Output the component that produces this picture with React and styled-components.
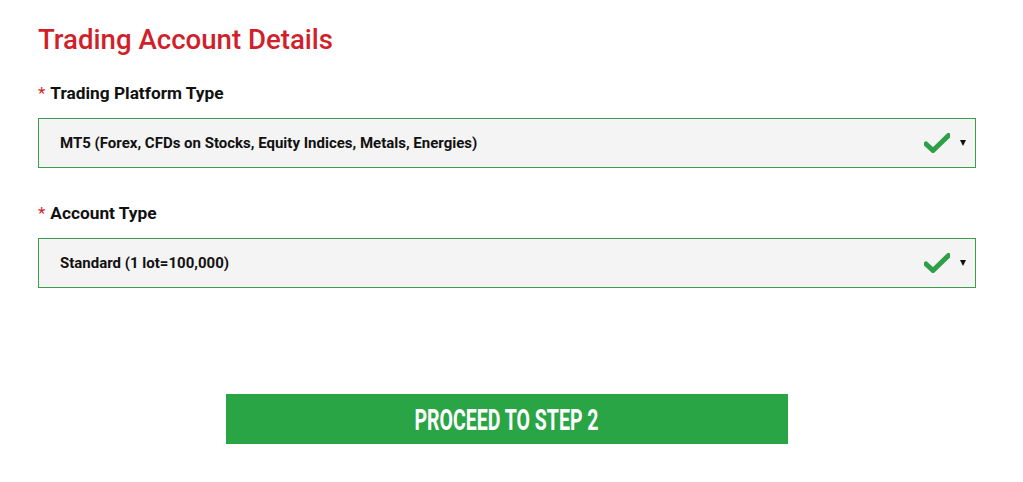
import React from "react";
import styled, { createGlobalStyle } from "styled-components";

const Global = createGlobalStyle`
  html, body { margin: 0; padding: 0; background: #fff; }
  body { font-family: Roboto, "Liberation Sans", Arial, sans-serif; color: #111; }
`;

const Page = styled.div`
  width: 1023px;
  height: 482px;
  box-sizing: border-box;
  padding: 24px 47px 0 38px;
  display: flex;
  flex-direction: column;
`;

const Title = styled.h2`
  margin: 0;
  font-size: 27.6px;
  line-height: 32px;
  font-weight: 500;
  color: #d11f2b;
`;

const Field = styled.div`
  display: flex;
  flex-direction: column;
  margin-top: ${(p) => p.$top}px;
`;

const Label = styled.label`
  font-size: 17.3px;
  line-height: 20px;
  font-weight: 700;
  color: #111;
  display: flex;
  align-items: baseline;
  gap: 5px;
`;

const Star = styled.span`
  color: #d11f2b;
  font-weight: 400;
  font-size: 17px;
`;

const Select = styled.div`
  margin-top: 15px;
  height: 50px;
  box-sizing: border-box;
  border: 1px solid #3b9e4c;
  background: #f4f4f4;
  display: flex;
  align-items: center;
  padding: 0 9px 0 21px;
`;

const Value = styled.span`
  flex: 1;
  font-size: 15px;
  font-weight: 700;
  color: #111;
`;

const Check = styled.svg`
  width: 26px;
  height: 20px;
  margin-right: 10px;
`;

const Caret = styled.span`
  width: 0;
  height: 0;
  border-left: 3.5px solid transparent;
  border-right: 3.5px solid transparent;
  border-top: 6px solid #111;
`;

const ButtonRow = styled.div`
  display: flex;
  justify-content: center;
  margin-top: 106px;
`;

const Button = styled.button`
  width: 562px;
  height: 50px;
  border: none;
  background: #2aa545;
  color: #fff;
  cursor: pointer;
  display: flex;
  align-items: center;
  justify-content: center;
  padding: 0;
`;

const ButtonText = styled.span`
  display: inline-block;
  font-family: Roboto, "Liberation Sans", sans-serif;
  font-weight: 700;
  font-size: 30px;
  transform: scaleX(0.65);
  white-space: nowrap;
`;

function CheckIcon() {
  return (
    <Check viewBox="0 0 26 20">
      <path
        d="M2 11 L9 17.5 L24.5 2.5"
        fill="none"
        stroke="#2f9e48"
        strokeWidth="5"
        strokeLinecap="round"
        strokeLinejoin="round"
      />
    </Check>
  );
}

function SelectField({ label, value, top }) {
  return (
    <Field $top={top}>
      <Label>
        <Star>*</Star>
        {label}
      </Label>
      <Select>
        <Value>{value}</Value>
        <CheckIcon />
        <Caret />
      </Select>
    </Field>
  );
}

export default function App() {
  return (
    <>
      <Global />
      <Page>
        <Title>Trading Account Details</Title>
        <SelectField
          top={27}
          label="Trading Platform Type"
          value="MT5 (Forex, CFDs on Stocks, Equity Indices, Metals, Energies)"
        />
        <SelectField top={35} label="Account Type" value="Standard (1 lot=100,000)" />
        <ButtonRow>
          <Button>
            <ButtonText>PROCEED TO STEP 2</ButtonText>
          </Button>
        </ButtonRow>
      </Page>
    </>
  );
}
